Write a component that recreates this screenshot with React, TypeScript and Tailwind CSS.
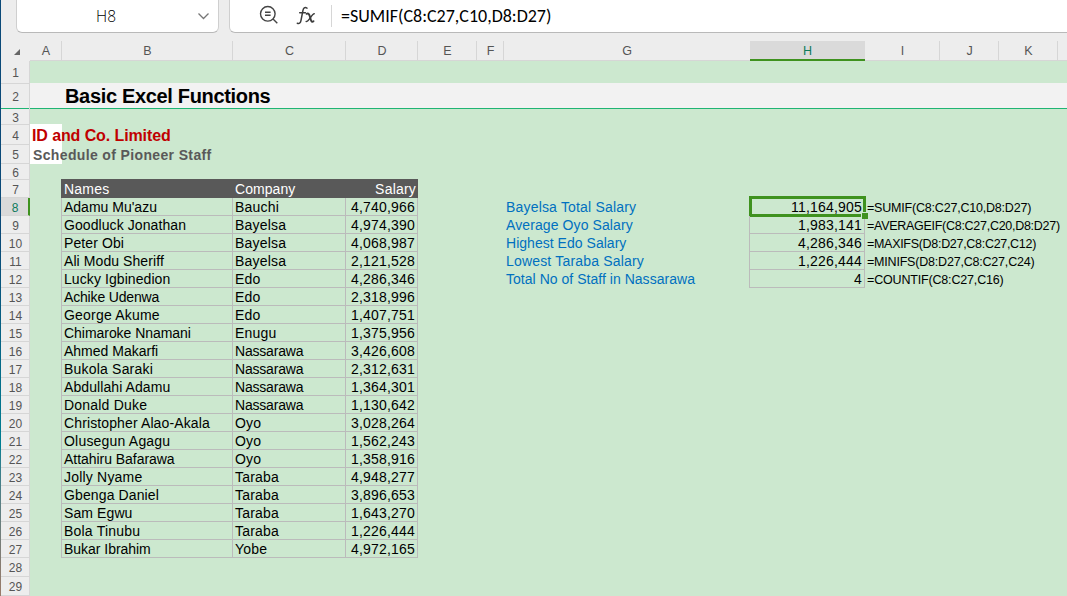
import React from "react";

const columns = [
  { id: "A", w: "w-[32px]" },
  { id: "B", w: "w-[171px]" },
  { id: "C", w: "w-[113px]" },
  { id: "D", w: "w-[72px]" },
  { id: "E", w: "w-[59px]" },
  { id: "F", w: "w-[27px]" },
  { id: "G", w: "w-[246px]" },
  { id: "H", w: "w-[115px]" },
  { id: "I", w: "w-[75px]" },
  { id: "J", w: "w-[59px]" },
  { id: "K", w: "w-[59px]" },
];

type Staff = [name: string, company: string, salary: string, tracking: string];

const staff: Staff[] = [
  ["Adamu Mu'azu", "Bauchi", "4,740,966", "tracking-[0px]"],
  ["Goodluck Jonathan", "Bayelsa", "4,974,390", "tracking-[0.08px]"],
  ["Peter Obi", "Bayelsa", "4,068,987", "tracking-[0.1px]"],
  ["Ali Modu Sheriff", "Bayelsa", "2,121,528", "tracking-[0.08px]"],
  ["Lucky Igbinedion", "Edo", "4,286,346", "tracking-[0.08px]"],
  ["Achike Udenwa", "Edo", "2,318,996", "tracking-[-0.17px]"],
  ["George Akume", "Edo", "1,407,751", "tracking-[0.2px]"],
  ["Chimaroke Nnamani", "Enugu", "1,375,956", "tracking-[-0.04px]"],
  ["Ahmed Makarfi", "Nassarawa", "3,426,608", "tracking-[0px]"],
  ["Bukola Saraki", "Nassarawa", "2,312,631", "tracking-[0.2px]"],
  ["Abdullahi Adamu", "Nassarawa", "1,364,301", "tracking-[0.08px]"],
  ["Donald Duke", "Nassarawa", "1,130,642", "tracking-[0.2px]"],
  ["Christopher Alao-Akala", "Oyo", "3,028,264", "tracking-[0.12px]"],
  ["Olusegun Agagu", "Oyo", "1,562,243", "tracking-[0.2px]"],
  ["Attahiru Bafarawa", "Oyo", "1,358,916", "tracking-[-0.04px]"],
  ["Jolly Nyame", "Taraba", "4,948,277", "tracking-[0.2px]"],
  ["Gbenga Daniel", "Taraba", "3,896,653", "tracking-[0.12px]"],
  ["Sam Egwu", "Taraba", "1,643,270", "tracking-[0.1px]"],
  ["Bola Tinubu", "Taraba", "1,226,444", "tracking-[0.2px]"],
  ["Bukar Ibrahim", "Yobe", "4,972,165", "tracking-[-0.03px]"],
];

const summary = [
  { label: "Bayelsa Total Salary", track: "tracking-[0.18px]", value: "11,164,905", formula: "=SUMIF(C8:C27,C10,D8:D27)", ftrack: "tracking-[-0.2px]" },
  { label: "Average Oyo Salary", track: "tracking-[0.1px]", value: "1,983,141", formula: "=AVERAGEIF(C8:C27,C20,D8:D27)", ftrack: "tracking-[-0.28px]" },
  { label: "Highest Edo Salary", track: "tracking-[0.03px]", value: "4,286,346", formula: "=MAXIFS(D8:D27,C8:C27,C12)", ftrack: "tracking-[-0.3px]" },
  { label: "Lowest Taraba Salary", track: "tracking-[0.18px]", value: "1,226,444", formula: "=MINIFS(D8:D27,C8:C27,C24)", ftrack: "tracking-[-0.2px]" },
  { label: "Total No of Staff in Nassarawa", track: "tracking-[0.03px]", value: "4", formula: "=COUNTIF(C8:C27,C16)", ftrack: "tracking-[-0.17px]" },
];

const rowHeights = [
  "h-[23px]", "h-[25px]", "h-[16px]", "h-[20px]", "h-[19px]", "h-[16px]", "h-[18px]",
  ...Array.from({ length: 20 }, () => "h-[18px]"),
  "h-[19px]", "h-[19px]",
];

function Toolbar() {
  return (
    <div className="flex h-[41px] shrink-0 items-start pl-[15px]">
      <div className="flex h-[33px] w-[203px] items-center rounded-b-[6px] border border-t-0 border-[#cfcfcf] border-b-[#b9b9b9] bg-white">
        <span className="w-[178px] text-center font-['Open_Sans','Noto_Sans',sans-serif] text-[15.5px] leading-[32px] font-light text-black">H8</span>
        <svg className="ml-[2px] h-[8px] w-[13px]" viewBox="0 0 13 8" fill="none" stroke="#777" strokeWidth="1.3">
          <path d="M1.5 1.5 6.5 6.5 11.5 1.5" />
        </svg>
      </div>
      <div className="ml-[10px] flex h-[33px] flex-1 items-center rounded-bl-[6px] border border-t-0 border-r-0 border-[#cfcfcf] border-b-[#b9b9b9] bg-white pl-[29px]">
        <svg className="-mt-[2px] h-[20px] w-[20px]" viewBox="0 0 20 20" fill="none" stroke="#444" strokeWidth="1.4">
          <circle cx="8.8" cy="8.8" r="7.3" />
          <path d="M14 14 18.3 18.3M6 7.3h5.6M6 10.3h5.6" />
        </svg>
        <svg className="-mt-[2px] ml-[17px] h-[19px] w-[20px]" viewBox="0 0 20 19" fill="none" stroke="#3c3c3c" strokeWidth="1.5" strokeLinecap="round">
          <path d="M11 2.1C8.7.9 7.4 2 6.9 4.6L5 14.3C4.5 16.9 3.4 18 1.3 17.2M3.7 6.8H9.4" />
          <path d="M10.6 7.8C12.5 7.1 13.2 8 13.8 10.2L14.8 13.8C15.3 15.6 16.2 16.2 17.5 15.2" strokeWidth="1.9" />
          <path d="M18.2 7.8C16.2 7.6 12.7 15.8 10.2 15.6" />
        </svg>
        <span className="ml-[15px] h-[22px] w-px bg-[#d6d6d6]" />
        <span className="ml-[9px] whitespace-pre font-[Carlito,Lato,sans-serif] text-[18px] leading-[32px] text-black">
          =SUMIF(C8:C27,C10,D8:D27)
        </span>
      </div>
    </div>
  );
}

function ColumnHeaders() {
  return (
    <div className="flex h-[20px] shrink-0 text-[12.5px] text-[#555]">
      <div className="flex w-[29px] items-end justify-end pr-[10px] pb-[6px]">
        <svg className="h-[6px] w-[6px]" viewBox="0 0 6 6" fill="#666"><path d="M6 0V6H0Z" /></svg>
      </div>
      <div className="flex flex-1 border-b border-[#d6d6d6]">
        {columns.map(({ id, w }) =>
          id === "H" ? (
            <div key={id} className={`${w} -mb-px shrink-0 border-b-2 border-[#3f921f] bg-[#dadada] text-center leading-[20px] text-[#0f7b5a]`}>{id}</div>
          ) : (
            <div key={id} className={`${w} shrink-0 border-r pl-px text-center leading-[20px] ${id === "G" ? "border-transparent" : "border-[#d6d6d6]"}`}>{id}</div>
          )
        )}
      </div>
    </div>
  );
}

function RowHeaders() {
  return (
    <div className="flex w-[29px] shrink-0 flex-col border-r border-[#d6d6d6] text-[12px] text-[#555]">
      {rowHeights.map((h, i) => (
        <div
          key={i}
          className={`${h} flex shrink-0 items-center justify-center border-b pl-px ${i === 1 ? "border-b-[#1fb574]" : "border-b-[#d6d6d6]"} ${
            i === 7 ? "-mr-px border-r-2 border-r-[#3f921f] bg-[#dadada] text-[#0f7b5a]" : ""
          }`}
        >
          <span className="pt-[2px]">{i + 1}</span>
        </div>
      ))}
    </div>
  );
}

function StaffTable() {
  return (
    <div className="w-[357px] text-[14px] tracking-[0.2px]">
      <div className="flex h-[19px] bg-[#595959] text-white">
        <div className="w-[171px] pl-[3px] leading-[20px]">Names</div>
        <div className="w-[113px] pl-[3px] leading-[20px] tracking-[0.05px]">Company</div>
        <div className="flex-1 pr-[2px] text-right leading-[20px]">Salary</div>
      </div>
      <div className="border-l border-[#bbb]">
        {staff.map(([name, company, salary, tracking]) => (
          <div key={name} className="flex h-[18px] leading-[19px] whitespace-nowrap">
            <div className={`w-[171px] border-r border-b border-[#bbb] pl-[2px] ${tracking}`}>{name}</div>
            <div className={`w-[113px] border-r border-b border-[#bbb] pl-[2px] ${company === "Nassarawa" ? "tracking-[-0.2px]" : ""}`}>{company}</div>
            <div className="w-[72px] border-r border-b border-[#bbb] pr-[2px] text-right">{salary}</div>
          </div>
        ))}
      </div>
    </div>
  );
}

function Summary() {
  return (
    <div className="mt-[19px] ml-[88px] text-[14px]">
      {summary.map((s, i) => (
        <div key={s.label} className="flex h-[18px] leading-[19px] whitespace-nowrap">
          <div className={`w-[243px] text-[#0070c0] ${s.track}`}>{s.label}</div>
          <div className="relative w-[116px] border border-t-0 border-[#bbb] pr-[2px] text-right tracking-[0.2px]">
            {s.value}
            {i === 0 && (
              <>
                <div className="absolute -top-[2px] -left-px h-[21px] w-[117px] border-[3px] border-[#3f921f]" />
                <div className="absolute top-[14px] left-[111px] z-10 h-[7px] w-[7px] border-t border-l border-[#cce8cf] bg-[#3f921f]" />
              </>
            )}
          </div>
          <div className={`pl-[2px] text-[12.5px] leading-[20px] ${s.ftrack}`}>{s.formula}</div>
        </div>
      ))}
    </div>
  );
}

function Sheet() {
  return (
    <div className="flex-1 bg-[#cce8cf]">
      <div className="h-[22px]" />
      <div className="h-[26px] border-b border-[#1fb574] bg-[#f2f2f2] pl-[35px] text-[20px] leading-[27px] font-bold tracking-[-0.33px]">Basic Excel Functions</div>
      <div className="h-[15px]" />
      <div className="h-[40px] w-[32px] bg-white pl-[2px] font-bold whitespace-nowrap">
        <div className="h-[20px] text-[16px] leading-[23px] tracking-[-0.1px] text-[#c00000]">ID and Co. Limited</div>
        <div className="h-[20px] pl-px text-[14px] leading-[22px] tracking-[0.36px] text-[#595959]">Schedule of Pioneer Staff</div>
      </div>
      <div className="mt-[15px] flex pl-[31px]">
        <StaffTable />
        <Summary />
      </div>
    </div>
  );
}

export default function App() {
  return (
    <div className="flex h-[596px] w-[1067px] overflow-hidden bg-[#ededed] font-['Liberation_Sans',Arial,sans-serif] text-black">
      <div className="w-px shrink-0 bg-linear-to-b from-[#0b4a78] from-40% via-[#007f92] via-75% to-[#9a7a68]" />
      <div className="flex flex-1 flex-col">
        <Toolbar />
        <ColumnHeaders />
        <div className="flex flex-1">
          <RowHeaders />
          <Sheet />
        </div>
      </div>
    </div>
  );
}
